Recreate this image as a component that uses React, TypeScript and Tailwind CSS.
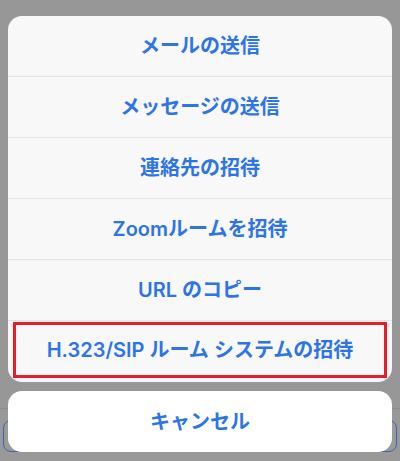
const options = [
  "メールの送信",
  "メッセージの送信",
  "連絡先の招待",
  "Zoomルームを招待",
  "URL のコピー",
];

export default function App() {
  return (
    <div
      className="relative h-[461px] w-[400px] overflow-hidden bg-[#979797]"
      style={{ fontFamily: 'Inter, "Noto Sans CJK JP", "Noto Sans", sans-serif' }}
    >
      {/* toolbar of the page behind the dimmed overlay */}
      <div className="absolute inset-x-0 bottom-0 h-[53px] border-t border-[#8c8c8c] bg-[#999999]">
        <div className="mx-[3px] mt-[11px] h-[32px] rounded-[8px] border border-[#3e63b5]" />
      </div>

      <div className="relative flex flex-col gap-[9px] px-2 pt-4">
        <div className="overflow-hidden rounded-[14px] bg-[#f8f8f8]">
          {options.map((label) => (
            <button
              key={label}
              className="flex h-[61px] w-full items-center justify-center border-b border-[#e3e3e3] text-[20px] font-semibold text-[#2d74e6]"
            >
              {label}
            </button>
          ))}
          <div className="flex h-[61px] items-center px-[5px] pt-[1px] pb-[4px]">
            <button className="flex h-full w-full items-center justify-center border-[3px] border-[#ea1c28] text-[20px] font-semibold text-[#2d74e6]">
              H.323/SIP ルーム システムの招待
            </button>
          </div>
        </div>
        <button className="flex h-[61px] w-full items-center justify-center rounded-[14px] bg-white text-[20px] font-semibold text-[#2d74e6]">
          キャンセル
        </button>
      </div>
    </div>
  );
}
